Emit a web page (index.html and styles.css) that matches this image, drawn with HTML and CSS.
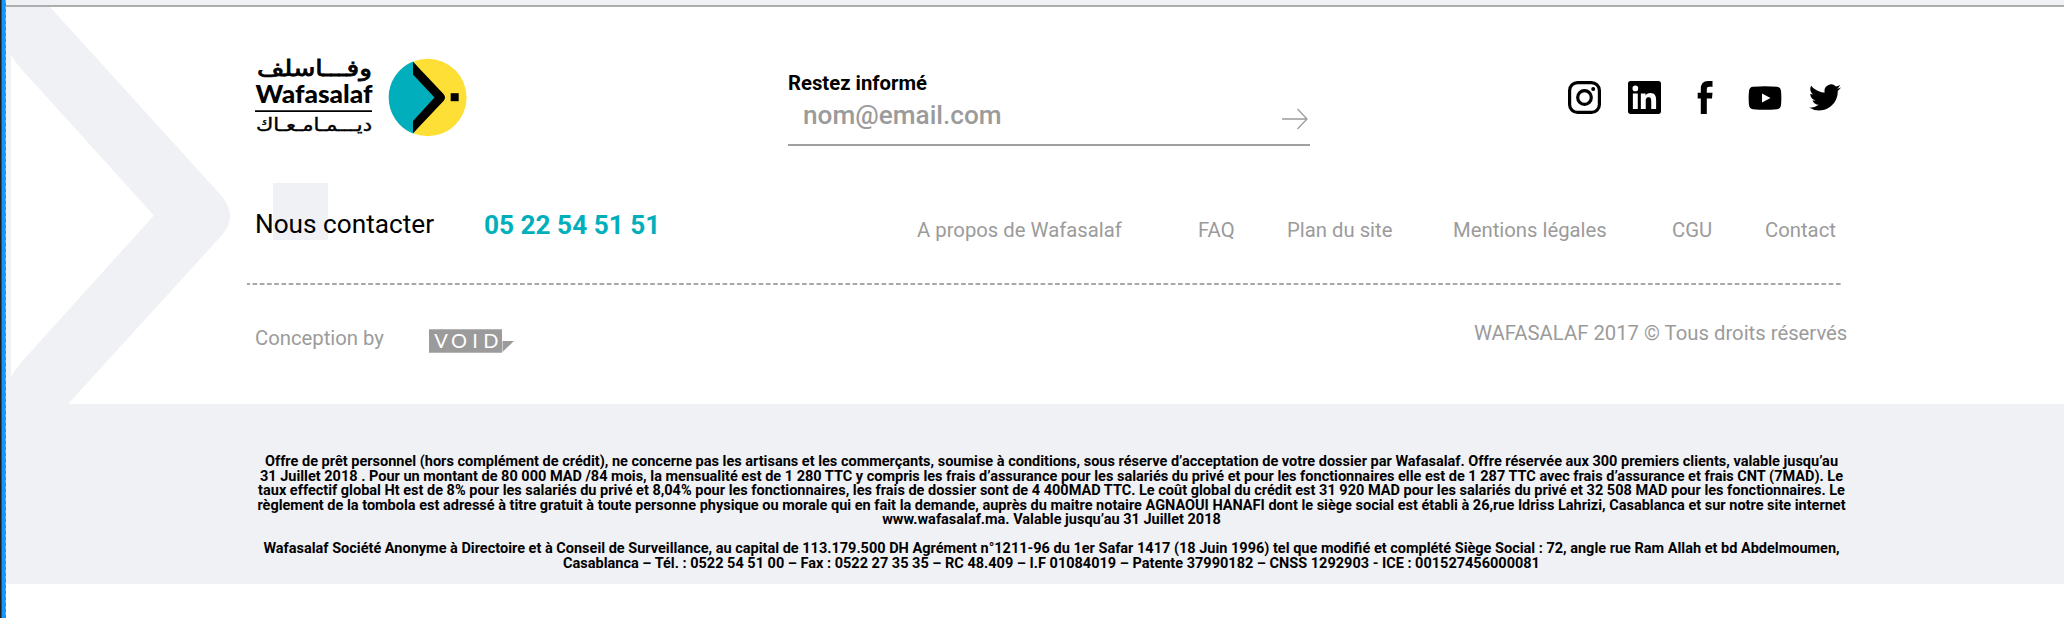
FILE: index.html
```html
<!DOCTYPE html>
<html lang="fr">
<head>
<meta charset="utf-8">
<title>Wafasalaf</title>
<link rel="stylesheet" href="styles.css">
</head>
<body>
<div class="edge"></div>
<footer class="footer">
  <div class="topline"></div>
  <div class="main">
    <svg class="motif" width="324" height="397" viewBox="6 7 324 397">
      <path d="M6 7H50L222 196.500Q238 216 222 235L68 404H6Z"/>
      <path class="hole" d="M11 55Q15 62 25 73L154 215.500L25 358Q16 368 11 377Z"/>
      <path d="M273 183h55v57h-55z"/>
    </svg>
    <div class="row row-top">
      <svg class="logo" width="216" height="90" viewBox="254 52 216 90">
        <text class="ar" x="372" y="76" textLength="115" lengthAdjust="spacingAndGlyphs">وفـــاسلف</text>
        <text class="lat" x="255.500" y="103.300" textLength="117" lengthAdjust="spacingAndGlyphs">Wafasalaf</text>
        <path d="M255 110.300h117v1.800H255z"/>
        <text class="ar small" x="372" y="131" textLength="116" lengthAdjust="spacingAndGlyphs">ديـــمـامـعـاك</text>
        <circle cx="427.800" cy="97.500" r="38.800" fill="#fedf36"/>
        <path d="M413 61.500A38.800 38.800 0 0 0 413 133.500L443 97.500Z" fill="#00afbb"/>
        <path d="M413 61.700L443.500 94Q446.500 97.500 443.500 101L413 133.300V121L434.500 97.500L413 74.500Z"/>
        <path d="M450.700 93.200h8v8h-8z"/>
      </svg>
      <form class="news">
        <label class="news-label">Restez informé</label>
        <div class="field">
          <span>nom@email.com</span>
          <svg width="28" height="22" viewBox="0 0 28 22"><path d="M1 11H26M16.500 1L26 11L16.500 21"/></svg>
        </div>
      </form>
      <div class="social">
        <svg width="33" height="33" viewBox="0 0 33 33"><rect x="1.600" y="1.600" width="29.800" height="29.800" rx="8" fill="none" stroke="#000" stroke-width="3.200"/><circle cx="16.500" cy="16.500" r="6.800" fill="none" stroke="#000" stroke-width="3.200"/><circle cx="25.200" cy="7.900" r="2"/></svg>
        <svg class="in" width="33" height="33" viewBox="0 0 24 24"><path d="M22.225 0H1.771C.792 0 0 .774 0 1.729v20.542C0 23.227.792 24 1.771 24h20.451C23.200 24 24 23.227 24 22.271V1.729C24 .774 23.200 0 22.222 0zM7.119 20.452H3.555V9h3.564zM5.337 7.433a2.063 2.063 0 1 1 0-4.126 2.063 2.063 0 0 1 0 4.126zM20.447 20.452h-3.554v-5.569c0-1.328-.027-3.037-1.852-3.037-1.853 0-2.136 1.445-2.136 2.939v5.667H9.351V9h3.414v1.561h.046c.477-.9 1.637-1.850 3.370-1.850 3.601 0 4.267 2.370 4.267 5.455z"/></svg>
        <svg class="fb" width="16" height="33" viewBox="0 0 16 33"><path d="M3.800 33V17.500H.7V11.700H3.800V8Q3.800 0 11 0H15.500V5.700H12Q9.800 5.700 9.800 8V11.700H15.500L15 17.500H9.800V33Z"/></svg>
        <svg class="yt" width="34" height="24" viewBox="0 0 34 24"><path fill-rule="evenodd" d="M5 .8Q17-.4 29 .8Q32.500 1 33 5Q33.700 12 33 19Q32.500 23 29 23.200Q17 24.200 5 23.200Q1.500 23 1 19Q.3 12 1 5Q1.500 1 5 .8ZM14 7.500V16.500L22.500 12Z"/></svg>
        <svg class="tw" width="32" height="27" viewBox="0 2 24 20"><path d="M23.953 4.570a10 10 0 01-2.825.775 4.958 4.958 0 002.163-2.723c-.951.555-2.005.959-3.127 1.184a4.920 4.920 0 00-8.384 4.482C7.690 8.095 4.067 6.130 1.640 3.162a4.822 4.822 0 00-.666 2.475c0 1.710.870 3.213 2.188 4.096a4.904 4.904 0 01-2.228-.616v.060a4.923 4.923 0 003.946 4.827 4.996 4.996 0 01-2.212.085 4.936 4.936 0 004.604 3.417 9.867 9.867 0 01-6.102 2.105c-.390 0-.779-.023-1.170-.067a13.995 13.995 0 007.557 2.209c9.053 0 13.998-7.496 13.998-13.985 0-.210 0-.420-.015-.630A9.935 9.935 0 0024 4.590z"/></svg>
      </div>
    </div>
    <div class="row row-contact">
      <span class="contact">Nous contacter</span>
      <span class="phone">05 22 54 51 51</span>
      <nav class="links">
        <a class="about">A propos de Wafasalaf</a>
        <a class="faq">FAQ</a>
        <a class="plan">Plan du site</a>
        <a class="mentions">Mentions légales</a>
        <a class="cgu">CGU</a>
        <a>Contact</a>
      </nav>
    </div>
    <svg class="dashes" width="1595" height="2"><path d="M0 1H1595"/></svg>
    <div class="row row-credit">
      <span class="by">Conception by</span>
      <svg class="void" width="86" height="24" viewBox="0 0 86 24"><path d="M0 .3H73V23.700H0Z"/><path d="M73.500 12H85L73.500 23Z"/><text x="5.300 22 43.300 54.300" y="19">VOID</text></svg>
      <span class="copy">WAFASALAF 2017 © Tous droits réservés</span>
    </div>
  </div>
  <div class="legal">
    <p>Offre de prêt personnel (hors complément de crédit), ne concerne pas les artisans et les commerçants, soumise à conditions, sous réserve d’acceptation de votre dossier par Wafasalaf. Offre réservée aux 300 premiers clients, valable jusqu’au<br>
    31 Juillet 2018 . Pour un montant de 80 000 MAD /84 mois, la mensualité est de 1 280 TTC y compris les frais d’assurance pour les salariés du privé et pour les fonctionnaires elle est de 1 287 TTC avec frais d’assurance et frais CNT (7MAD). Le<br>
    taux effectif global Ht est de 8% pour les salariés du privé et 8,04% pour les fonctionnaires, les frais de dossier sont de 4 400MAD TTC. Le coût global du crédit est 31 920 MAD pour les salariés du privé et 32 508 MAD pour les fonctionnaires. Le<br>
    règlement de la tombola est adressé à titre gratuit à toute personne physique ou morale qui en fait la demande, auprès du maitre notaire AGNAOUI HANAFI dont le siège social est établi à 26,rue Idriss Lahrizi, Casablanca et sur notre site internet<br>
    www.wafasalaf.ma. Valable jusqu’au 31 Juillet 2018</p>
    <p>Wafasalaf Société Anonyme à Directoire et à Conseil de Surveillance, au capital de 113.179.500 DH Agrément n°1211-96 du 1er Safar 1417 (18 Juin 1996) tel que modifié et complété Siège Social : 72, angle rue Ram Allah et bd Abdelmoumen,<br>
    Casablanca – Tél. : 0522 54 51 00 – Fax : 0522 27 35 35 – RC 48.409 – I.F 01084019 – Patente 37990182 – CNSS 1292903 - ICE : 001527456000081</p>
  </div>
</footer>
</body>
</html>
```
FILE: styles.css
```css
* { box-sizing: border-box; }
body {
  margin: 0;
  display: flex;
  height: 618px;
  overflow: hidden;
  background: #fff;
  color: #000;
  font-family: Roboto, sans-serif;
}
.edge {
  flex: none;
  width: 6px;
  background:
    repeating-linear-gradient(180deg, rgba(255, 255, 255, .25) 0 3px, transparent 3px 6px) 5px 0 / 1px 100% no-repeat,
    linear-gradient(90deg, #1d1d1f 0 1px, #2a5070 1px 2px, #1298fd 2px);
}
.footer { flex: none; width: 2058px; }
.topline {
  height: 7px;
  background: #f0f1f5;
  border-bottom: 2px solid #adadae;
}
.main { position: relative; height: 397px; }
.motif { position: absolute; left: 0; top: 0; fill: #f0f1f5; }
.hole { fill: #fff; }
.row {
  position: relative;
  display: flex;
  align-items: flex-start;
  white-space: nowrap;
}

.row-top { padding: 45px 0 0 248px; height: 135px; }
.logo { flex: none; }
.ar { font: 22px "DejaVu Sans", sans-serif; direction: rtl; stroke: #000; stroke-width: .8; }
.small { font-size: 18px; stroke-width: .4; }
.lat { font: 900 25px Lato, sans-serif; }
.news { margin: 19px 0 0 318px; width: 522px; }
.news-label {
  display: block;
  font-size: 20.300px;
  font-weight: 700;
  line-height: 24px;
}
.field {
  display: flex;
  justify-content: space-between;
  margin-top: 4px;
  height: 47px;
  padding: 0 1px 0 15px;
  border-bottom: 2px solid #a0a0a0;
  color: #9b9b9b;
  font-size: 26.200px;
  font-weight: 500;
  line-height: 32px;
}
.field svg { margin-top: 8.500px; fill: none; stroke: #9b9b9b; stroke-width: 1.300; }
.social { display: flex; align-items: center; margin: 29px 0 0 258px; height: 33px; }
.in { margin-left: 27px; }
.fb { margin-left: 36px; }
.yt { margin-left: 34.500px; }
.tw { margin: -1px 0 0 27px; }

.row-contact { margin-top: 65px; padding-left: 249px; height: 76px; }
.contact { width: 229px; padding-top: .5px; font-size: 26.200px; line-height: 32px; }
.phone {
  width: 433px;
  padding-top: 1.500px;
  color: #00afbb;
  font-size: 26.200px;
  font-weight: 700;
  line-height: 32px;
}
.links { display: flex; padding-top: 10.500px; color: #9b9b9b; font-size: 20.300px; line-height: 24px; }
.about { width: 281px; }
.faq { width: 89px; }
.plan { width: 166px; }
.mentions { width: 219px; }
.cgu { width: 93px; }

.dashes {
  position: relative;
  display: block;
  margin-left: 241px;
  stroke: #a8a8a8;
  stroke-width: 2;
  stroke-dasharray: 4.700 2.530;
  stroke-dashoffset: 1.700;
}
.row-credit { padding: 35px 0 0 249px; color: #9b9b9b; font-size: 20.300px; line-height: 24px; }
.by { width: 174px; padding-top: 6px; }
.void { margin-top: 9px; fill: #9b9b9b; }
.void text { font: 400 20px Lato, sans-serif; fill: #fff; }
.copy { margin-left: 959px; padding-top: .5px; }

.legal {
  height: 180px;
  padding: 51px 0 0 33px;
  background: #f0f1f5;
  font-size: 14.500px;
  font-weight: 700;
  line-height: 14.500px;
  text-align: center;
  white-space: nowrap;
}
.legal p { margin: 0 0 14.500px; }
```
